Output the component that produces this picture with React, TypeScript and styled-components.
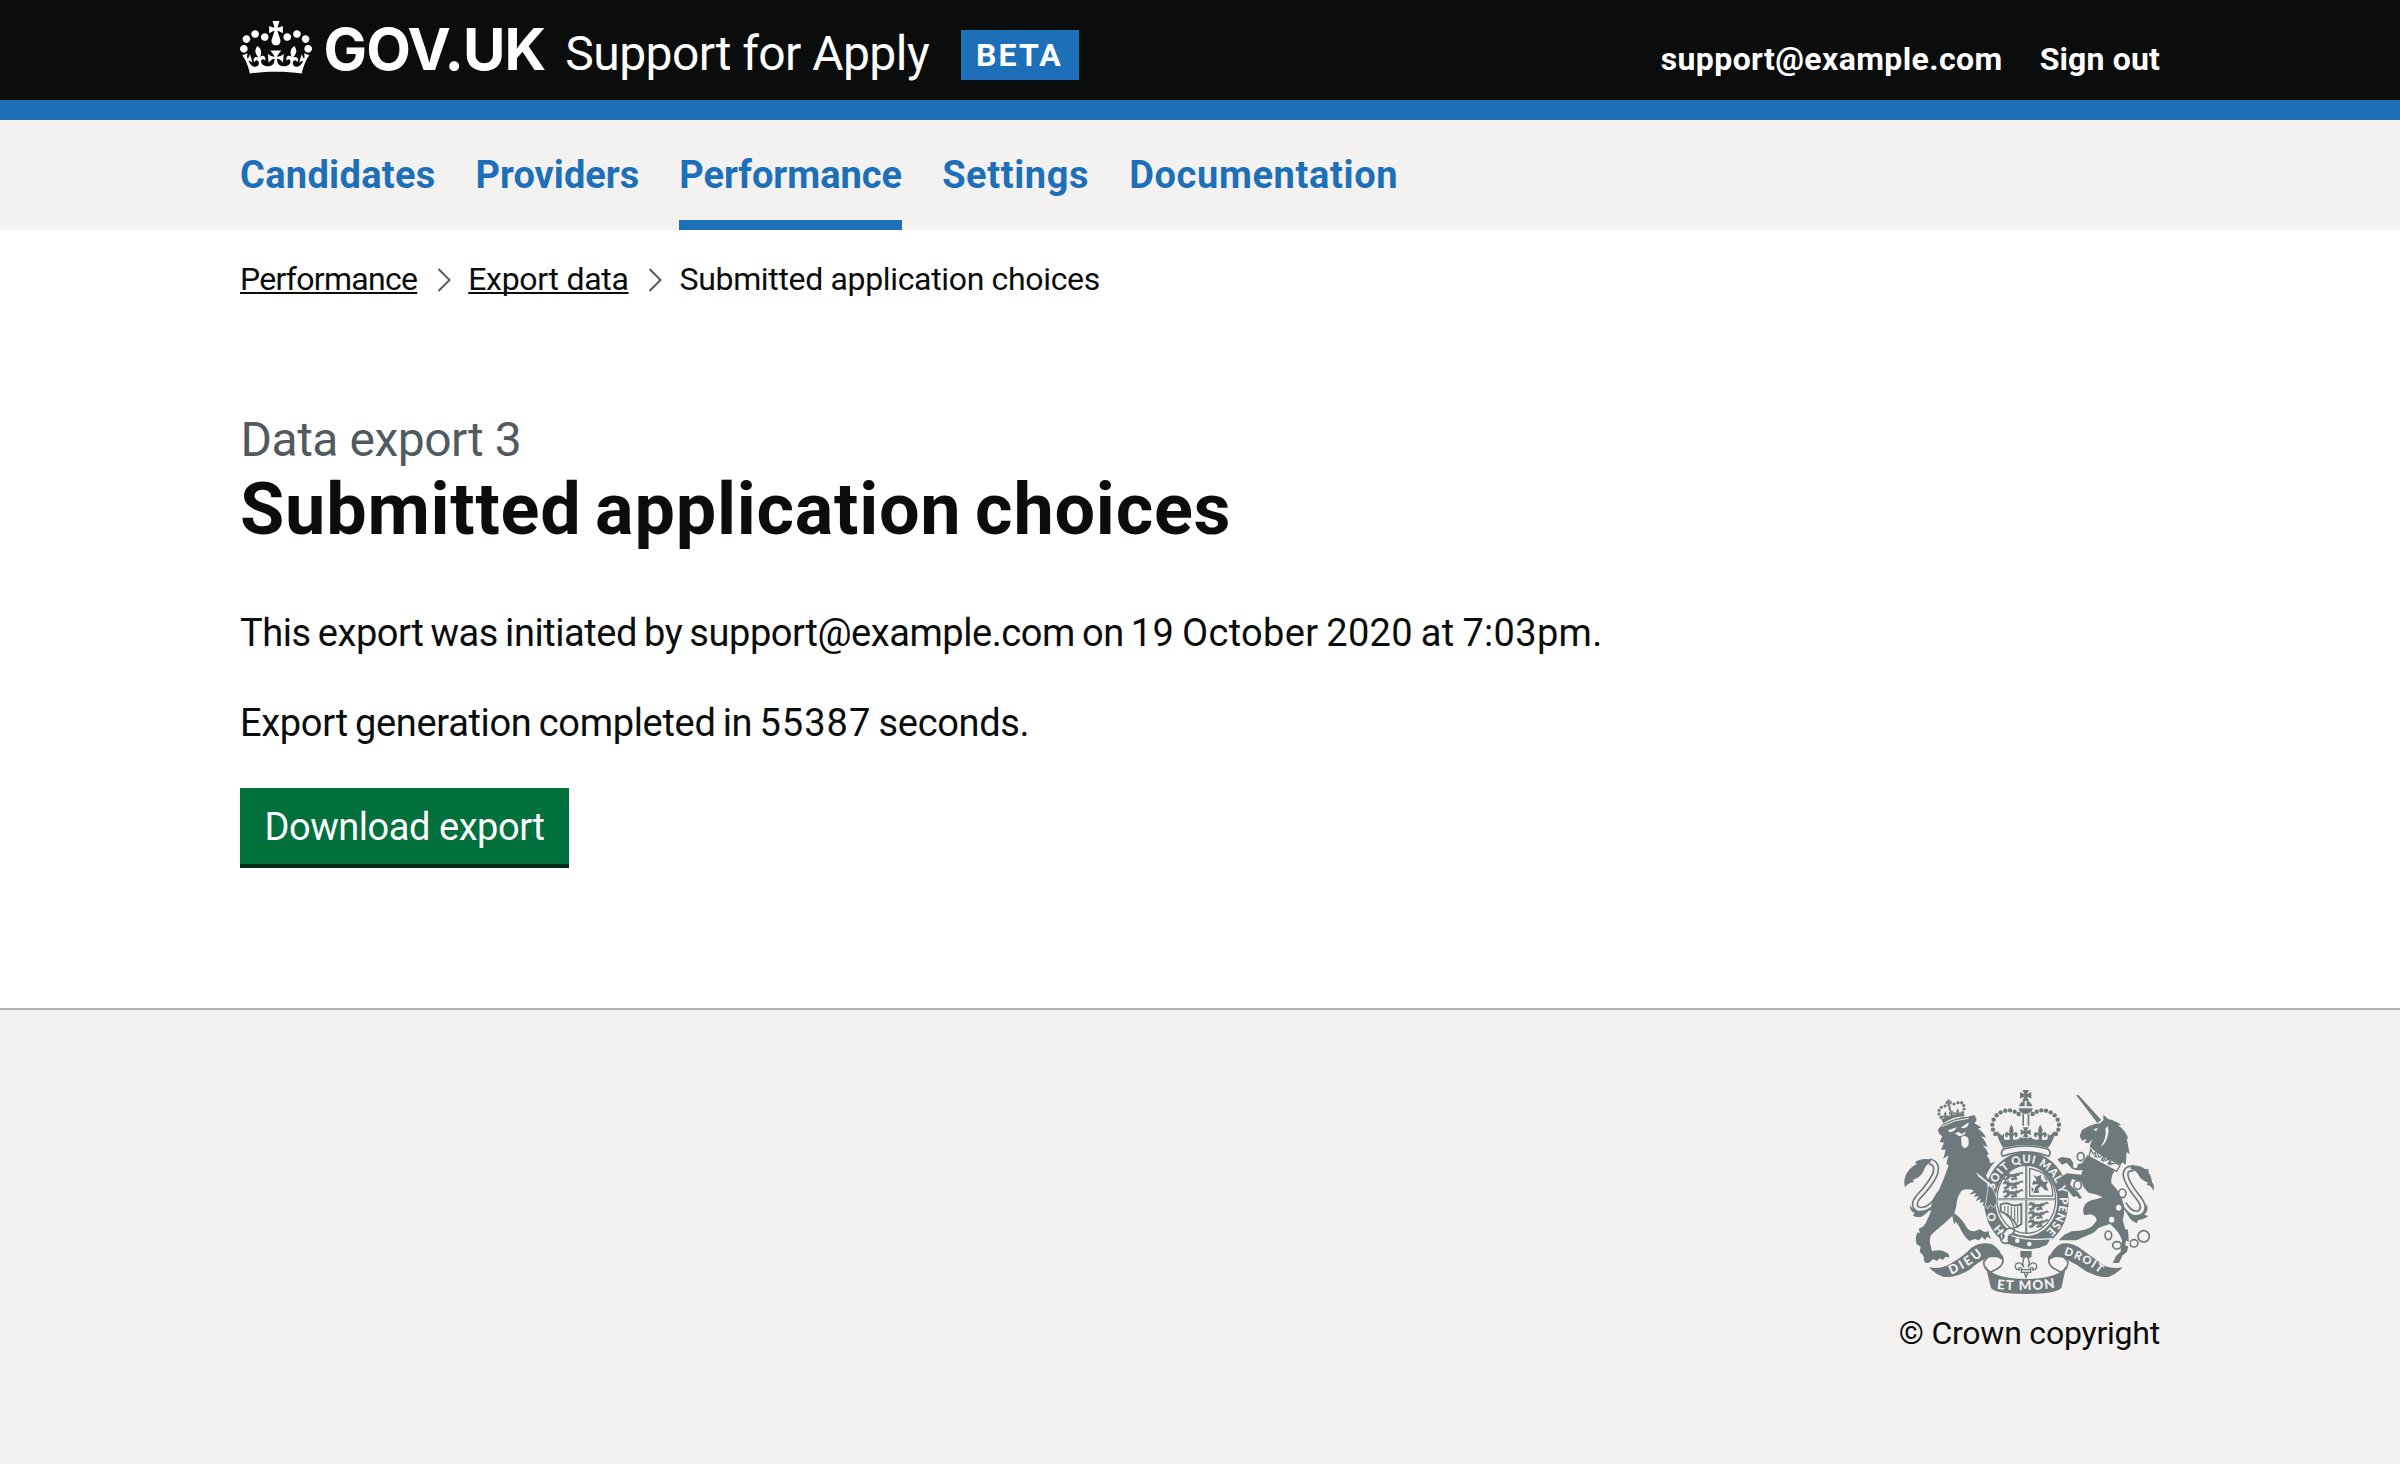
import React from "react";
import styled, { createGlobalStyle } from "styled-components";

const ink = "#0b0c0c";
const blue = "#1d70b8";
const paper = "#f3f2f1";
const crestGrey = "#6e797c";

const GlobalStyle = createGlobalStyle`
  body {
    margin: 0;
    background: #ffffff;
    color: ${ink};
    font-family: Roboto, "Liberation Sans", sans-serif;
    font-kerning: normal;
  }
`;

const Page = styled.div`
  display: flex;
  flex-direction: column;
  min-height: 1464px;
`;

const Container = styled.div`
  width: 1920px;
  margin: 0 auto;
`;

const Header = styled.header`
  background: ${ink};
  border-bottom: 20px solid ${blue};
`;

const HeaderRow = styled(Container)`
  display: flex;
  align-items: flex-start;
  height: 100px;
`;

const Logo = styled.a`
  display: flex;
  align-items: flex-start;
  color: #ffffff;
  text-decoration: none;
`;

const CrownIcon = styled.svg`
  display: block;
  width: 72px;
  height: 53px;
  margin-top: 21px;
  fill: currentColor;
`;

const LogoText = styled.span`
  margin: 19px 0 0 11.5px;
  font: 700 58px/60px Inter, Roboto, sans-serif;
  letter-spacing: -0.9px;
  white-space: nowrap;
`;

const ServiceName = styled.a`
  margin: 24px 0 0 20px;
  color: #ffffff;
  font-size: 48px;
  line-height: 60px;
  letter-spacing: -0.55px;
  white-space: nowrap;
`;

const PhaseTag = styled.strong`
  margin: 30px 0 0 31.5px;
  width: 118px;
  height: 50px;
  box-sizing: border-box;
  padding-left: 15.5px;
  background: ${blue};
  color: #ffffff;
  font-size: 32px;
  line-height: 50px;
  letter-spacing: 2.1px;
`;

const Account = styled.nav`
  display: flex;
  gap: 37px;
  margin: 39px 0 0 auto;
`;

const AccountLink = styled.a<{ $tracking: number }>`
  color: #ffffff;
  font-size: 32px;
  font-weight: 700;
  line-height: 40px;
  letter-spacing: ${(p) => p.$tracking}px;
`;

const NavBar = styled.nav`
  background: ${paper};
`;

const NavList = styled(Container)`
  display: flex;
  gap: 40px;
`;

const NavLink = styled.a<{ $current?: boolean; $tracking: number }>`
  padding-top: 10px;
  border-bottom: 10px solid ${(p) => (p.$current ? blue : "transparent")};
  color: ${blue};
  font-size: 38px;
  font-weight: 700;
  line-height: 90px;
  letter-spacing: ${(p) => p.$tracking}px;
  text-decoration: none;
`;

const Breadcrumbs = styled(Container)`
  display: flex;
  align-items: center;
  padding-top: 29px;
  font-size: 32px;
  line-height: 40px;
`;

const Crumb = styled.a<{ $tracking: number }>`
  color: ${ink};
  letter-spacing: ${(p) => p.$tracking}px;
  text-decoration: underline;
  text-decoration-thickness: 2px;
  text-underline-offset: 2px;
  text-decoration-skip-ink: none;
`;

const CurrentCrumb = styled.span`
  letter-spacing: -0.34px;
`;

const Chevron = styled.svg`
  width: 14px;
  height: 24px;
  margin: 2px 17.5px 0 19.5px;
  fill: none;
  stroke: #505a5f;
  stroke-width: 2;
`;

const Main = styled(Container).attrs({ as: "main" })`
  padding: 116px 0 140px;
`;

const Caption = styled.span`
  display: block;
  padding-left: 0.5px;
  color: #505a5f;
  font-size: 48px;
  line-height: 50px;
  letter-spacing: -0.48px;
`;

const Title = styled.h1`
  margin: 7px 0 61px;
  font-size: 72px;
  font-weight: 700;
  line-height: 75px;
  letter-spacing: 0.75px;
  word-spacing: -5px;
`;

const Paragraph = styled.p<{ $tracking: number }>`
  margin: 0 0 40px;
  font-size: 38px;
  line-height: 50px;
  letter-spacing: ${(p) => p.$tracking}px;
  word-spacing: -1.9px;
`;

const Moment = styled.time`
  letter-spacing: 0.32px;
`;

const Figure = styled.span`
  letter-spacing: 1px;
`;

const Button = styled.a`
  display: flex;
  justify-content: center;
  width: 329px;
  box-sizing: border-box;
  padding-top: 2px;
  border-bottom: 4px solid #002d18;
  background: #00703c;
  color: #ffffff;
  font-size: 38px;
  line-height: 74px;
  letter-spacing: -0.45px;
  white-space: nowrap;
`;

const Footer = styled.footer`
  flex: 1;
  border-top: 2px solid #b1b4b6;
  background: ${paper};
`;

const FooterRow = styled(Container)`
  display: flex;
  justify-content: flex-end;
  padding-top: 80px;
`;

const Copyright = styled.a`
  display: flex;
  flex-direction: column;
  align-items: center;
  gap: 19px;
  color: ${ink};
  font-size: 32px;
  line-height: 40px;
  letter-spacing: -0.22px;
`;

const CrestImage = styled.svg`
  display: block;
  width: 250px;
  height: 204px;
`;

const Motto = styled.text`
  fill: ${paper};
  font-family: Lato, Roboto, sans-serif;
  font-weight: 900;
`;

const navItems = [
  { label: "Candidates", tracking: 0.3 },
  { label: "Providers", tracking: 0 },
  { label: "Performance", tracking: 0, current: true },
  { label: "Settings", tracking: 0.6 },
  { label: "Documentation", tracking: 0.63 },
];

const Crown = () => (
  <CrownIcon viewBox="0 0 132 97" aria-hidden="true">
    <path
      fillRule="evenodd"
      d="M25 30.2c3.5 1.5 7.7-.2 9.1-3.7 1.5-3.6-.2-7.8-3.9-9.2-3.6-1.4-7.6.3-9.1 3.9-1.4 3.5.3 7.5 3.9 9zM9 39.5c3.6 1.5 7.8-.2 9.2-3.7 1.5-3.6-.2-7.8-3.9-9.1-3.6-1.5-7.6.2-9.1 3.8-1.4 3.5.3 7.5 3.8 9zM4.4 57.2c3.5 1.5 7.7-.2 9.1-3.8 1.5-3.6-.2-7.7-3.9-9.1-3.5-1.5-7.6.3-9.1 3.8-1.4 3.5.3 7.6 3.9 9.1zm38.3-21.4c3.5 1.5 7.7-.2 9.1-3.8 1.5-3.6-.2-7.7-3.9-9.1-3.6-1.5-7.6.3-9.1 3.8-1.3 3.6.4 7.7 3.9 9.1zm64.4-5.6c-3.6 1.5-7.8-.2-9.1-3.7-1.5-3.6.2-7.8 3.8-9.2 3.6-1.4 7.7.3 9.2 3.9 1.3 3.5-.4 7.5-3.9 9zm15.9 9.3c-3.6 1.5-7.7-.2-9.1-3.7-1.5-3.6.2-7.8 3.7-9.1 3.6-1.5 7.7.2 9.2 3.8 1.5 3.5-.3 7.5-3.8 9zm4.7 17.7c-3.6 1.5-7.8-.2-9.2-3.8-1.5-3.6.2-7.7 3.9-9.1 3.6-1.5 7.7.3 9.2 3.8 1.3 3.5-.4 7.6-3.9 9.1zM89.3 35.8c-3.6 1.5-7.8-.2-9.2-3.8-1.4-3.6.2-7.7 3.9-9.1 3.6-1.5 7.7.3 9.2 3.8 1.4 3.6-.3 7.7-3.9 9.1zM69.7 17.7l8.9 4.7V9.3l-8.9 2.8c-.2-.3-.5-.6-.9-.9L72.4 0H59.6l3.5 11.2c-.3.3-.6.5-.9.9l-8.8-2.8v13.1l8.8-4.7c.3.3.6.7.9.9l-5 15.4v.1c-.2.8-.4 1.6-.4 2.4 0 4.1 3.1 7.5 7 8.1h.2c.3 0 .7.1 1 .1.4 0 .7 0 1-.1h.2c4-.6 7.1-4.1 7.1-8.1 0-.8-.1-1.7-.4-2.4V34l-5.1-15.4c.4-.2.7-.6 1-.9zM66 92.8c16.9 0 32.8 1.1 47.1 3.2 4-16.9 8.9-26.7 14-33.5l-9.6-3.4c1 4.9 1.1 7.2 0 10.2-1.5-1.4-3-4.3-4.2-8.7L108.6 76c2.8-2 5-3.2 7.5-3.3-4.4 9.4-10 11.9-13.6 11.2-4.3-.8-6.3-4.6-5.6-7.9 1-4.7 5.7-5.9 8-.5 4.3-8.7-3-11.4-7.6-8.8 7.1-7.2 7.9-13.5 2.1-21.1-8 6.1-8.1 12.3-4.5 20.8-4.7-5.4-12.1-2.5-9.5 6.2 3.4-5.2 7.9-2 7.2 3.1-.6 4.3-6.4 7.8-13.5 7.2-10.3-.9-10.9-8-11.2-13.8 2.5-.5 7.1 1.8 11 7.3L80.2 60c-4.1 4.4-8 5.3-12.3 5.4 1.4-4.4 8-11.6 8-11.6H55.5s6.4 7.2 7.9 11.6c-4.2-.1-8-1-12.3-5.4l1.4 16.4c3.9-5.5 8.5-7.7 10.9-7.3-.3 5.8-.9 12.8-11.1 13.8-7.2.6-12.9-2.9-13.5-7.2-.7-5 3.8-8.3 7.1-3.1 2.7-8.7-4.6-11.6-9.4-6.2 3.7-8.5 3.6-14.7-4.6-20.8-5.8 7.6-5 13.9 2.2 21.1-4.7-2.6-11.9.1-7.7 8.8 2.3-5.5 7.1-4.2 8.1.5.7 3.3-1.3 7.1-5.7 7.9-3.5.7-9-1.8-13.5-11.2 2.5.1 4.7 1.3 7.5 3.3l-4.7-15.4c-1.2 4.4-2.7 7.2-4.3 8.7-1.1-3-.9-5.3 0-10.2l-9.5 3.4c5 6.9 9.9 16.7 14 33.5 14.8-2.1 30.8-3.2 47.7-3.2z"
    />
  </CrownIcon>
);

const archPearls: [number, number][] = [
  [346, 192], [339, 179], [337, 164], [341, 149], [350, 136],
  [362, 127], [376, 122], [390, 121], [404, 125], [416, 132],
];

const smallPearls: [number, number][] = [
  [183, 142], [177, 132], [177, 121], [184, 112], [195, 108],
  [222, 102], [234, 98], [245, 98], [251, 106], [252, 117], [248, 128],
];

const LionPassant = () => (
  <path
    stroke={crestGrey}
    strokeWidth="2"
    d="M0 6L5 0l5 3 3-3 1 6 14 1 8-4 2 6-5 3 3 9-6-1-2-6-10-1-5 7-6-1 3-7-4-5-6 3zM36 6L48 0l4 4-8 1-5 6M2 18h8v4H2zM22 17l8 1-2 4h-7z"
  />
);

const LionGroup = ({ x, y, step }: { x: number; y: number; step: number }) => (
  <>
    {[0, 1, 2].map((n) => (
      <g key={n} transform={`translate(${x} ${y + n * step}) scale(1.15 1.08)`}>
        <LionPassant />
      </g>
    ))}
  </>
);

const Fleur = ({ x, y, s = 1 }: { x: number; y: number; s?: number }) => (
  <path
    transform={`translate(${x} ${y}) scale(${s})`}
    d="M0-20Q9-8 4 4Q15-6 17 6Q16 14 9 13Q12 7 7 7L4 13V20H-4V13L-7 7Q-12 7-9 13Q-16 14-17 6Q-15-6-4 4Q-9-8 0-20z"
  />
);

const CrossPattee = ({ x, y, r }: { x: number; y: number; r: number }) => (
  <path
    transform={`translate(${x} ${y}) scale(${r / 10})`}
    d="M-6-10H6L2-2L10-6V6L2 2L6 10H-6L-2 2L-10 6V-6L-2-2z"
  />
);

const lionTail = "M170 390Q140 428 113 417Q96 405 114 382Q152 342 165 313Q176 280 148 274";
const unicornTail = "M732 402Q756 440 780 428Q798 415 778 387Q742 343 737 318Q734 292 762 296";

const Crest = () => (
  <CrestImage viewBox="72 60 750 612" fill={crestGrey} aria-hidden="true">
    <defs>
      <path id="garter" d="M343 360A100 113 0 1 1 490 489" />
      <path id="garter-start" d="M374 481A102 115 0 0 1 340 416" />
      <path id="dieu" d="M213 614Q268 592 320 545" />
      <path id="mon" d="M350 657Q437 666 527 653" />
      <path id="droit" d="M551 555Q602 566 662 612" />
    </defs>

    {/* Lion's tail */}
    <g fill="none">
      <path d={lionTail} stroke={crestGrey} strokeWidth="19" />
      <path d={lionTail} stroke={paper} strokeWidth="9" />
    </g>
    <path d="M152 268Q118 264 104 278L112 281Q88 292 77 316Q70 334 75 352Q84 338 102 336L98 330Q124 322 132 300Q136 286 152 277z" />
    <path d="M90 405Q88 422 104 430L98 437Q112 444 124 440Q142 432 160 404Q136 426 110 422Q96 418 90 405z" />

    {/* Lion */}
    <path d="M173 179L188 163Q222 143 262 140L284 135L290 151L283 160L304 172L294 176Q312 188 318 203L303 199Q318 214 322 231L309 226Q320 238 326 253L320 256Q330 268 331 280L346 275Q328 292 318 318L332 342L344 372L350 400L341 413L331 404L323 416L318 402L307 409L311 395L299 399L303 386L287 394L296 378L281 381L289 369L268 374L282 361Q260 354 246 361Q230 380 229 408L223 430Q246 446 260 472Q266 485 284 484L300 478L312 486L327 484L327 494L334 507L321 500L315 510L307 501L296 511L284 507L268 513Q250 497 238 470L228 455L222 463L217 438Q190 464 160 488Q146 500 150 520L156 544Q175 538 190 543L205 551L209 562L196 561L189 570L180 565L170 573L160 567L147 578L137 579L131 571Q134 560 126 552L119 546L122 531L110 522Q104 502 113 487L120 490L116 476Q134 472 141 450Q156 424 154 404Q158 382 177 360Q194 322 206 286L199 282L205 256L190 266L197 239L183 239L192 218L179 215L187 199L178 192z" />
    <g fill={paper}>
      <path d="M243 202Q254 194 264 203Q271 224 258 234Q244 234 244 216z" />
      <path d="M204 181L230 172Q224 185 210 187zM242 173L266 157Q268 170 252 175zM224 190L236 186L246 192L258 184L252 195L238 199z" />
    </g>
    <path d="M186 169Q223 148 266 145" fill="none" stroke={paper} strokeWidth="3" />
    <path d="M184 148Q214 132 252 132L254 139Q220 139 190 160z" />
    {smallPearls.map(([x, y]) => (
      <circle key={`${x}-${y}`} cx={x} cy={y} r="4.8" />
    ))}
    <CrossPattee x={206} y={98} r={9} />
    <path d="M204 106h6l4 18h-6z" />
    <Fleur x={196} y={136} s={0.6} />
    <Fleur x={233} y={127} s={0.6} />
    <CrossPattee x={215} y={130} r={8} />

    {/* Royal crown */}
    <CrossPattee x={437} y={76} r={17} />
    <path d="M417 109Q420 95 434 93V109zM440 93Q454 95 457 109H440zM415 115H459Q455 131 437 132Q419 131 415 115z" />
    {archPearls.map(([x, y]) => (
      <React.Fragment key={`${x}-${y}`}>
        <circle cx={x} cy={y} r="6.6" />
        <circle cx={874 - x} cy={y} r="6.6" />
      </React.Fragment>
    ))}
    <path d="M427 132h5v35h-5zM443 132h5v35h-5z" />
    <CrossPattee x={437} y={187} r={15} />
    <Fleur x={394} y={187} s={1.15} />
    <Fleur x={481} y={187} s={1.15} />
    <path d="M350 182L366 197L372 190V208Q383 213 394 207Q415 213 422 200Q430 208 437 202Q444 208 452 200Q460 213 481 207Q492 213 503 208V190L509 197L525 182Q524 208 504 234Q437 216 370 234Q352 208 350 182z" />

    {/* Garter and shield */}
    <path fillRule="evenodd" d="M439 245A127 147 0 1 1 439 539A127 147 0 1 1 439 245zM439 286A93 106 0 1 0 439 498A93 106 0 1 0 439 286z" />
    <path d="M371 237Q437 219 503 237Q516 246 506 259Q437 232 368 259Q359 246 371 237z" fill={paper} stroke={crestGrey} strokeWidth="5" />
    <Motto fontSize="34">
      <textPath href="#garter" textLength="405">SOIT QUI MAL Y PENSE</textPath>
    </Motto>
    <Motto fontSize="33">
      <textPath href="#garter-start" textLength="66">HO</textPath>
    </Motto>
    <ellipse cx="439" cy="388" rx="88" ry="102" fill={paper} stroke={crestGrey} strokeWidth="4" />
    <path d="M435 286h7v204h-7zM351 385h176v6H351z" />
    <path d="M438 288v200M353 388h172" stroke={paper} strokeWidth="1.4" />
    <LionGroup x={370} y={306} step={26} />
    <LionGroup x={446} y={396} step={26} />
    <path d="M449 296V378H518Q520 340 494 313Q474 299 449 296z" fill="none" stroke={crestGrey} strokeWidth="4" />
    <path d="M458 315L470 320L484 314L482 326L492 336L506 334L498 346L506 362L494 360L484 348L474 356L478 368L460 370L466 352L476 342L456 344L460 332L470 334L466 324zM488 312L504 330L498 332zM454 352l8 4-6 12z" />
    <path d="M362 404Q378 396 390 403Q406 410 424 402V462L412 470Q400 440 362 424z" fill="none" stroke={crestGrey} strokeWidth="6" />
    <path d="M374 408V425M384 408V432M394 410V440M404 412V450M413 411V460" stroke={crestGrey} strokeWidth="3.4" />
    <path d="M378 434Q398 450 402 474L414 470" fill="none" stroke={crestGrey} strokeWidth="4" />

    {/* Forepaw over the garter */}
    <path d="M288 306L341 350L336 352L296 320z" fill={paper} />
    <path d="M326 344Q352 368 351 398L341 413L331 404L323 417L317 404L320 380z" stroke={paper} strokeWidth="2" />

    {/* Buckle and strap */}
    <path d="M364 483Q420 516 514 506L502 526Q468 544 430 538Q396 532 366 515z" stroke={paper} strokeWidth="4" />
    <path d="M372 486Q388 466 404 480Q400 494 388 496Q382 508 388 517Q370 526 362 510Q380 498 366 492z" fill={paper} stroke={crestGrey} strokeWidth="5" />
    <circle cx="412" cy="512" r="7" fill={paper} />
    <circle cx="448" cy="522" r="7" fill={paper} />
    <path d="M421 543H455V560L448 565H429L421 560z" />
    <g fill={paper} stroke={crestGrey} strokeWidth="4">
      <path d="M438 556Q454 574 444 592Q456 572 468 582Q475 598 458 600Q462 590 452 594L444 606L438 622L432 606L424 594Q414 590 418 600Q401 598 408 582Q420 572 432 592Q422 574 438 556z" />
      <path d="M424 599H452V607H424z" />
    </g>

    {/* Unicorn's tail */}
    <g fill="none">
      <path d={unicornTail} stroke={crestGrey} strokeWidth="19" />
      <path d={unicornTail} stroke={paper} strokeWidth="9" />
    </g>
    <path d="M752 287Q782 284 796 298L806 297Q802 305 812 318L816 335Q824 346 821 362Q814 346 800 344L804 338Q784 330 777 318Q772 303 752 297z" />
    <path d="M800 400Q808 422 793 434L805 438Q790 450 776 449L770 460Q748 452 738 424Q762 446 786 430Q800 420 800 400z" />

    {/* Unicorn */}
    <path d="M588 75L596 76L664 150L652 159z" />
    <path d="M599 198L606 180Q630 163 660 160L670 151V134L686 148Q708 152 724 166L714 166Q738 182 745 207L740 205L749 252L740 246L737 284L727 277L723 284L682 268L640 240L629 229L637 207L626 220L614 218L620 207L606 212z" />
    <path d="M640 178L654 174L648 184zM684 168Q690 196 672 222L662 230Q682 200 676 176z" fill={paper} />
    <path d="M622 256L704 302Q692 318 694 340Q716 360 726 388Q738 420 728 450L736 478L744 479L747 520L741 545L728 556L717 579H698L708 558L722 545L726 510Q716 482 690 462Q670 468 655 474Q642 492 612 500L590 511H536L553 494L575 484Q622 482 637 468L650 452Q650 438 632 433L613 436Q606 420 614 406Q622 392 648 388L668 382Q650 372 626 368Q606 350 606 336L576 327L570 344L594 366L606 384L596 386L590 378L580 381L560 356L552 330L534 346L548 318L560 310L604 314L608 300Q590 302 576 296L560 278L546 284L532 268L545 261L570 265L584 284L606 280z" />
    <path d="M632 238L640 252L650 244L657 262L668 255L676 272L688 266L694 282L706 279L720 286L710 304L627 260z" fill={paper} stroke={crestGrey} strokeWidth="4" />
    <path d="M642 260l5-12 5 16zM662 271l6-12 5 18zM682 282l6-12 5 18z" />
    <g fill={paper} stroke={crestGrey} strokeWidth="5">
      <ellipse cx="602" cy="260" rx="10" ry="12" />
      <ellipse cx="593" cy="345" rx="11" ry="13" />
      <ellipse cx="727" cy="370" rx="11" ry="13" />
      <ellipse cx="685" cy="496" rx="10" ry="13" />
      <ellipse cx="711" cy="526" rx="13" ry="11" />
      <ellipse cx="762" cy="520" rx="12" ry="11" />
      <circle cx="791" cy="499" r="17" />
    </g>
    <g fill={paper}>
      <ellipse cx="586" cy="286" rx="7" ry="9" />
      <ellipse cx="716" cy="413" rx="8" ry="9" />
      <ellipse cx="695" cy="449" rx="8" ry="9" />
      <path d="M738 512l12 4-4 14-10-4z" />
    </g>

    {/* Motto ribbon */}
    <g fill={paper} stroke={crestGrey} strokeWidth="5">
      <path d="M366 558Q376 582 352 596L334 606Q312 602 311 576L324 560z" />
      <path d="M509 558Q499 582 523 596L541 606Q563 602 564 576L551 560z" />
    </g>
    <path d="M147 592Q182 598 210 582Q254 556 274 533Q306 514 336 523Q364 538 371 574Q344 552 318 566Q292 576 268 600Q236 618 208 621H190Q164 612 147 592z" />
    <path d="M728 592Q694 598 668 584Q624 552 596 532Q566 514 540 523Q514 538 504 574Q530 552 556 566Q590 582 618 604Q646 618 668 621H686Q710 612 728 592z" />
    <path d="M316 586Q334 626 437 627Q540 626 559 586Q552 616 545 652Q534 672 437 672Q340 672 332 652Q324 614 316 586z" />
    <Motto fontSize="38"><textPath href="#dieu" textLength="112">DIEU</textPath></Motto>
    <Motto fontSize="40"><textPath href="#mon" textLength="175">ET MON</textPath></Motto>
    <Motto fontSize="34"><textPath href="#droit" textLength="122">DROIT</textPath></Motto>
  </CrestImage>
);

const Separator = () => (
  <Chevron viewBox="0 0 14 24" aria-hidden="true">
    <path d="M1.5 1L12.5 12L1.5 23" />
  </Chevron>
);

export default function App() {
  return (
    <Page>
      <GlobalStyle />
      <Header>
        <HeaderRow>
          <Logo>
            <Crown />
            <LogoText>GOV.UK</LogoText>
          </Logo>
          <ServiceName>Support for Apply</ServiceName>
          <PhaseTag>BETA</PhaseTag>
          <Account>
            <AccountLink $tracking={0.4}>support@example.com</AccountLink>
            <AccountLink $tracking={0.15}>Sign out</AccountLink>
          </Account>
        </HeaderRow>
      </Header>
      <NavBar>
        <NavList>
          {navItems.map((item) => (
            <NavLink key={item.label} $current={item.current} $tracking={item.tracking}>
              {item.label}
            </NavLink>
          ))}
        </NavList>
      </NavBar>
      <Breadcrumbs>
        <Crumb $tracking={-0.72}>Performance</Crumb>
        <Separator />
        <Crumb $tracking={-0.3}>Export data</Crumb>
        <Separator />
        <CurrentCrumb>Submitted application choices</CurrentCrumb>
      </Breadcrumbs>
      <Main>
        <Caption>Data export 3</Caption>
        <Title>Submitted application choices</Title>
        <Paragraph $tracking={-0.44}>
          This export was initiated by support@example.com on{" "}
          <Moment>19 October 2020 at 7:03pm.</Moment>
        </Paragraph>
        <Paragraph $tracking={-0.32}>
          Export generation completed in <Figure>55387</Figure> seconds.
        </Paragraph>
        <Button>Download export</Button>
      </Main>
      <Footer>
        <FooterRow>
          <Copyright>
            <Crest />
            <span>© Crown copyright</span>
          </Copyright>
        </FooterRow>
      </Footer>
    </Page>
  );
}
